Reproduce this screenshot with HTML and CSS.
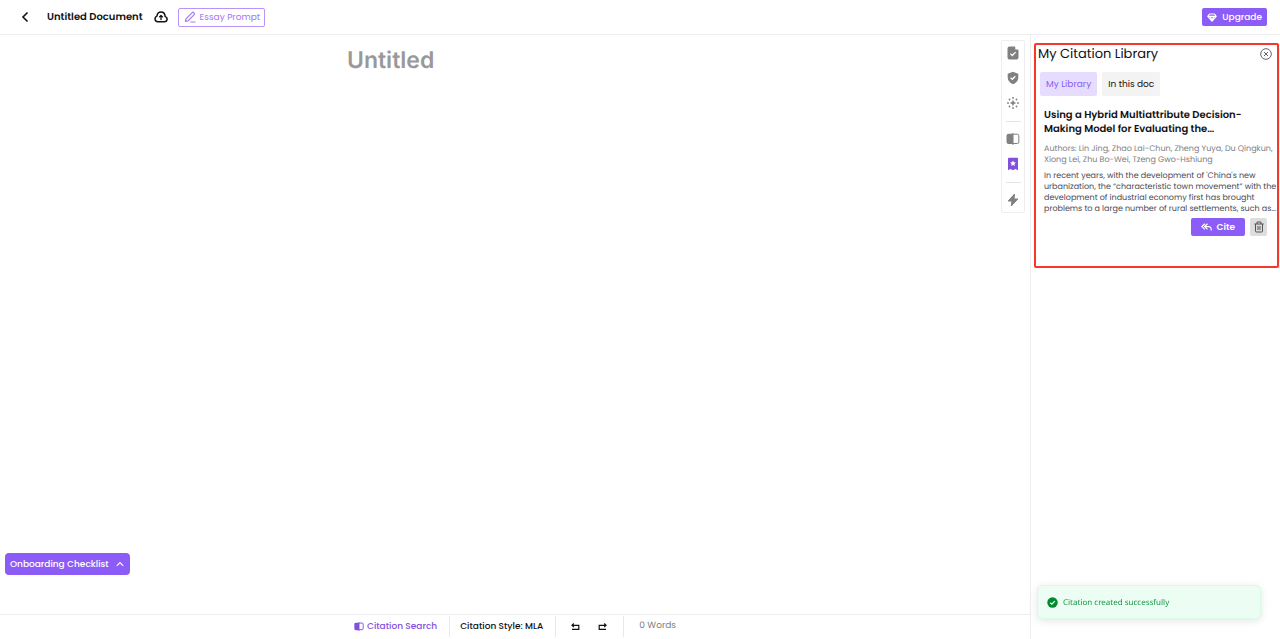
FILE: index.html
```html
<!DOCTYPE html>
<html lang="en">
  <head>
    <meta charset="UTF-8" />
    <meta name="viewport" content="width=device-width, initial-scale=1.0" />
    <title>Untitled Document</title>
    <link rel="stylesheet" href="styles.css">
  </head>
  <body>
    <header class="topbar">
      <button class="icon-button back" aria-label="Back">
        <svg width="8" height="12" viewBox="0 0 8 12" fill="none" stroke="currentColor" stroke-width="1.6"><path d="M6.5 1.5 2 6l4.5 4.5" /></svg>
      </button>
      <span class="doc-name">Untitled Document</span>
      <svg class="cloud" width="14" height="12" viewBox="0 0 14 12" fill="none" stroke="currentColor" stroke-width="1.5" stroke-linecap="round" stroke-linejoin="round"><path d="M3.8 10.7h6.7a2.6 2.6 0 0 0 .7-5.1C11 2.800 9.300 1 7 1S3.200 2.700 2.900 5.100a2.900 2.900 0 0 0 .9 5.600Z" /><path d="M7 8.500V4.600M5.500 5.900 7 4.400l1.500 1.500" stroke-width="1.300" /></svg>
      <button class="prompt-button">
        <svg width="12" height="12" viewBox="0 0 12 12" fill="none" stroke="currentColor" stroke-width="1.200" stroke-linejoin="round"><path d="M2 7.800 8.200 1.600a1 1 0 0 1 1.400 0l.6.6a1 1 0 0 1 0 1.400L4 9.800l-2.600.5ZM6.500 11h5" /></svg>
        Essay Prompt
      </button>
      <button class="upgrade-button">
        <svg width="10" height="9" viewBox="0 0 10 9" fill="none" stroke="currentColor" stroke-width="1.200" stroke-linejoin="round"><path d="M2.500 1h5L9.200 3.300 5 8.200.8 3.300ZM.8 3.300h8.400M3.300 3.300 5 7.600l1.700-4.300" /></svg>
        Upgrade
      </button>
    </header>

    <div class="layout">
      <div class="workspace">
        <main class="editor">
          <h1 class="doc-title">Untitled</h1>
        </main>

        <nav class="tools" aria-label="Tools">
          <button class="icon-button" aria-label="Review">
            <svg width="12" height="14" viewBox="0 0 12 14"><path fill="currentColor" d="M2.500.5h5.300L11.500 4v7.500a2 2 0 0 1-2 2h-7a2 2 0 0 1-2-2v-9a2 2 0 0 1 2-2Z" /><path fill="none" stroke="#fff" stroke-width="1.300" d="m3.400 7.600 1.900 1.900 3.300-3.400" /><path fill="#fff" d="M8.300.5v3h3.200v-1L9.300.5Z" /></svg>
          </button>
          <button class="icon-button" aria-label="Plagiarism check">
            <svg width="12" height="14" viewBox="0 0 12 14"><path fill="currentColor" d="m6 .8 5.300 2v3.700c0 3.200-2.200 5.400-5.300 6.700C2.900 11.900.7 9.700.7 6.500V2.800Z" /><path fill="none" stroke="#fff" stroke-width="1.300" d="m3.600 6.700 1.700 1.600 3-3" /></svg>
          </button>
          <button class="icon-button" aria-label="AI tools">
            <svg width="12" height="14" viewBox="0 0 12 14" fill="currentColor"><path d="m6 3.700 1 2.300 2.300 1L7 8l-1 2.300L5 8 2.700 7 5 6Z" /><circle cx="6" cy="2" r=".9" /><circle cx="6" cy="12" r=".9" /><circle cx="1" cy="7" r=".9" /><circle cx="11" cy="7" r=".9" /><circle cx="2.500" cy="3.500" r=".9" /><circle cx="9.500" cy="3.500" r=".9" /><circle cx="2.500" cy="10.500" r=".9" /><circle cx="9.500" cy="10.500" r=".9" /></svg>
          </button>
          <hr class="tools-line">
          <button class="icon-button" aria-label="Citation search">
            <svg width="14" height="12" viewBox="0 0 14 12"><path fill="currentColor" d="M2.500.7H7v10.400H2.500a2 2 0 0 1-2-2V2.700a2 2 0 0 1 2-2Z" /><path fill="none" stroke="currentColor" d="M7 1.200h4.300A1.500 1.500 0 0 1 12.800 2.700V9a1.500 1.500 0 0 1-1.500 1.500H7M7 0v12" /></svg>
          </button>
          <button class="icon-button active" aria-label="My citations">
            <svg width="12" height="14" viewBox="0 0 12 14"><path fill="currentColor" d="M2 .8h8a1 1 0 0 1 1 1v11.400L8.500 12 6 13.200 3.500 12 1 13.200V1.800a1 1 0 0 1 1-1Z" /><path fill="#fff" d="m6 3.400.9 1.900 2 .2-1.500 1.400.4 2.100L6 8l-1.800 1 .4-2.100-1.500-1.400 2-.2Z" /></svg>
          </button>
          <hr class="tools-line">
          <button class="icon-button" aria-label="Quick actions">
            <svg width="12" height="14" viewBox="0 0 12 14" fill="currentColor" stroke="currentColor" stroke-linejoin="round"><path d="M7.500 1 1.200 8h3.700l-.6 5L10.800 6H7Z" /></svg>
          </button>
        </nav>

        <footer class="statusbar">
          <button class="status-item search">
            <svg width="10" height="9" viewBox="0 0 14 12"><path fill="currentColor" d="M2.500.7H7v10.400H2.500a2 2 0 0 1-2-2V2.700a2 2 0 0 1 2-2Z" /><path fill="none" stroke="currentColor" stroke-width="1.300" d="M7 1.200h4.300A1.500 1.500 0 0 1 12.800 2.700V9a1.500 1.500 0 0 1-1.500 1.500H7M7 0v12" /></svg>
            Citation Search
          </button>
          <button class="status-item style">Citation Style: MLA</button>
          <div class="status-item history">
            <button class="icon-button" aria-label="Undo">
              <svg width="9" height="8" viewBox="0 0 9 8" fill="none" stroke="currentColor" stroke-width="1.200"><path d="M2.800.5 1 2.300l1.800 1.800M1 2.300h6.800v4H1" /></svg>
            </button>
            <button class="icon-button" aria-label="Redo">
              <svg width="9" height="8" viewBox="0 0 9 8" fill="none" stroke="currentColor" stroke-width="1.200"><path d="M6.200.5 8 2.300 6.200 4.100M8 2.300H1.200v4H8" /></svg>
            </button>
          </div>
          <span class="status-item words">0 Words</span>
        </footer>

        <button class="checklist-button">
          Onboarding Checklist
          <svg width="8" height="6" viewBox="0 0 8 6" fill="none" stroke="currentColor" stroke-width="1.200"><path d="M.8 4.800 4 1.500l3.200 3.300" /></svg>
        </button>
      </div>

      <aside class="sidebar">
        <section class="library">
          <div class="library-header">
            <h2 class="library-title">My Citation Library</h2>
            <button class="icon-button close" aria-label="Close">
              <svg width="12" height="12" viewBox="0 0 12 12" fill="none" stroke="currentColor"><circle cx="6" cy="6" r="5.300" /><path d="m4 4 4 4M8 4 4 8" /></svg>
            </button>
          </div>
          <div class="tabs">
            <button class="tab tab-active">My Library</button>
            <button class="tab">In this doc</button>
          </div>
          <article class="citation">
            <h3 class="citation-title">Using a Hybrid Multiattribute Decision-Making Model for Evaluating the…</h3>
            <p class="citation-authors">Authors: Lin Jing, Zhao Lai-Chun, Zheng Yuya, Du Qingkun, Xiong Lei, Zhu Bo-Wei, Tzeng Gwo-Hshiung</p>
            <p class="citation-text">In recent years, with the development of 'China's new urbanization, the “characteristic town movement” with the development of industrial economy first has brought problems to a large number of rural settlements, such as…</p>
            <div class="citation-actions">
              <button class="cite-button">
                <svg width="11" height="8" viewBox="0 0 11 8" fill="none" stroke="currentColor" stroke-width="1.200"><path d="M3.800.8.900 3.600l2.900 2.800M6.500.8 3.600 3.600l2.900 2.800M3.600 3.600h4.200a2.400 2.400 0 0 1 2.400 2.400v1.500" /></svg>
                Cite
              </button>
              <button class="delete-button" aria-label="Delete">
                <svg width="10" height="12" viewBox="0 0 10 12" fill="none" stroke="currentColor"><path d="M.3 3h9.400M3 3V1h4v2M1.500 3v7a1 1 0 0 0 1 1h5a1 1 0 0 0 1-1V3M4 5v4M6 5v4" /></svg>
              </button>
            </div>
          </article>
        </section>
      </aside>
    </div>

    <div class="toast" role="status">
      <svg width="11" height="11" viewBox="0 0 11 11"><circle cx="5.500" cy="5.500" r="5.200" fill="#008a2e" /><path d="m3.300 5.700 1.600 1.500 2.900-3" fill="none" stroke="#fff" stroke-width="1.200" /></svg>
      Citation created successfully
    </div>
  </body>
</html>
```

FILE: styles.css
```css
* {
  box-sizing: border-box;
}
body {
  margin: 0;
  height: 100vh;
  display: flex;
  flex-direction: column;
  font-family: Poppins, Inter, sans-serif;
  font-size: 9px;
  color: #111;
  background-color: #fff;
  text-rendering: geometricPrecision;
}
button {
  font: inherit;
  color: inherit;
  border: none;
  background: none;
  padding: 0;
  cursor: pointer;
  white-space: nowrap;
}
svg {
  display: block;
  flex-shrink: 0;
}
h1,
h2,
h3,
p {
  margin: 0;
}
.icon-button {
  display: flex;
  align-items: center;
  justify-content: center;
}

/* top bar */
.topbar {
  display: flex;
  align-items: center;
  height: 35px;
  padding: 0 13px 0 21px;
  border-bottom: 1px solid #eee;
}
.doc-name {
  margin: 0 11px 0 18px;
  font-size: 10px;
  font-weight: 600;
}
.prompt-button {
  display: flex;
  align-items: center;
  gap: 4px;
  height: 19px;
  margin-left: 10px;
  padding: 0 4px 0 5px;
  border: 1px solid #b794fb;
  border-radius: 2px;
  color: #a178f8;
}
.upgrade-button {
  display: flex;
  align-items: center;
  gap: 5px;
  height: 18px;
  margin-left: auto;
  padding: 0 5px;
  border-radius: 2px;
  background-color: #8b5cf6;
  color: #fff;
  font-weight: 500;
}

/* workspace */
.layout {
  flex: 1;
  display: flex;
  min-height: 0;
}
.workspace {
  flex: 1;
  position: relative;
  display: flex;
  flex-direction: column;
}
.editor {
  flex: 1;
  width: 100%;
  max-width: 336px;
  margin: 0 auto;
  padding-top: 11px;
}
.doc-title {
  font-family: Inter, sans-serif;
  font-size: 23px;
  line-height: 28px;
  font-weight: 600;
  color: #999;
}
.tools {
  position: absolute;
  top: 5px;
  right: 5px;
  display: flex;
  flex-direction: column;
  align-items: center;
  gap: 11px;
  width: 24px;
  padding: 5px 0;
  border: 1px solid #eee;
  border-radius: 2px;
  color: #808080;
}
.tools .icon-button {
  height: 14px;
}
.tools .active {
  color: #8350dc;
}
.tools-line {
  width: 15px;
  height: 1px;
  margin: 0 0 -1px;
  border: none;
  background-color: #e4e4e4;
}

/* status bar */
.statusbar {
  display: flex;
  justify-content: center;
  height: 25px;
  padding-top: 1px;
  border-top: 1px solid #eee;
}
.status-item {
  display: flex;
  align-items: center;
  height: 21px;
  padding: 0 12px 0 10px;
  font-weight: 500;
}
.status-item + .status-item {
  border-left: 1px solid #e8e8e8;
}
.search {
  gap: 3px;
  color: #8350dc;
}
.history {
  gap: 18px;
  padding: 0 16px 0 15px;
}
.words {
  padding: 0 10px 0 15px;
  color: #808080;
  font-weight: 400;
}
.checklist-button {
  position: absolute;
  left: 5px;
  bottom: 64px;
  display: flex;
  align-items: center;
  gap: 7px;
  height: 22px;
  padding: 0 6px 0 5px;
  border-radius: 4px;
  background-color: #8b5cf6;
  color: #fff;
  font-weight: 500;
}

/* sidebar */
.sidebar {
  width: 250px;
  padding: 8px 1px 0 3px;
  border-left: 1px solid #eee;
}
.library {
  padding: 0 0 30px 2px;
  border: 2px solid #f5382c;
  border-radius: 2px;
}
.library-header {
  display: flex;
  align-items: center;
  justify-content: space-between;
  height: 18px;
  padding-right: 5px;
}
.library-title {
  font-size: 13px;
  font-weight: 400;
}
.close {
  color: #666;
}
.tabs {
  display: flex;
  gap: 5px;
  padding: 9px 2px;
}
.tab {
  height: 24px;
  padding: 0 6px;
  border-radius: 2px;
  background-color: #f3f3f3;
}
.tab-active {
  background-color: #e6dcfd;
  color: #8b5cf6;
}
.citation {
  padding: 3px 0 0 6px;
}
.citation-title {
  font-size: 10px;
  line-height: 14px;
  font-weight: 600;
}
.citation-authors {
  margin-top: 7px;
  font-size: 8px;
  line-height: 11px;
  color: #808080;
}
.citation-text {
  margin-top: 5px;
  font-size: 8px;
  line-height: 11px;
  color: #4b4b55;
}
.citation-actions {
  display: flex;
  justify-content: flex-end;
  gap: 5px;
  margin-top: 4px;
  padding-right: 10px;
}
.cite-button {
  display: flex;
  align-items: center;
  gap: 5px;
  height: 18px;
  padding: 0 10px;
  border-radius: 2px;
  background-color: #8b5cf6;
  color: #fff;
  font-weight: 600;
}
.delete-button {
  display: flex;
  align-items: center;
  justify-content: center;
  width: 17px;
  height: 18px;
  border-radius: 2px;
  background-color: #ddd;
  color: #555;
}

.toast {
  position: fixed;
  right: 19px;
  bottom: 20px;
  display: flex;
  align-items: center;
  gap: 5px;
  width: 224px;
  height: 34px;
  padding: 0 9px;
  border: 1px solid #d8fbe5;
  border-radius: 5px;
  background-color: #ecfdf3;
  box-shadow: 0 2px 8px rgba(0, 0, 0, 0.1);
  color: #159a45;
  font-family: "Noto Sans", sans-serif;
  font-size: 8px;
}
```
